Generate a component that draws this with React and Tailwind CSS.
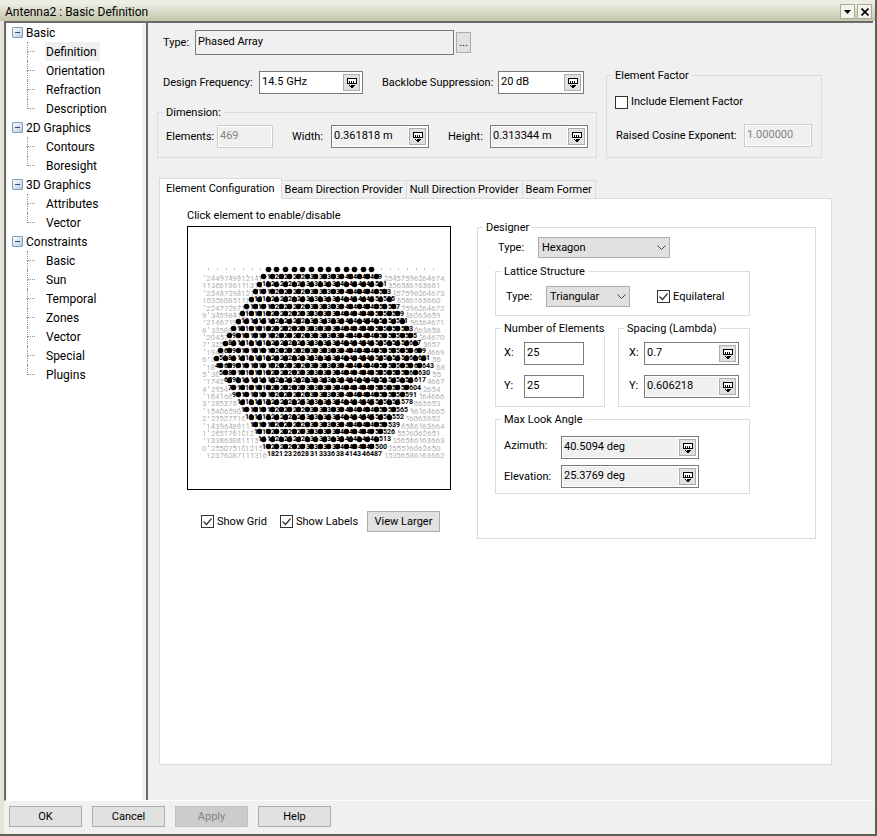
import { useState } from "react";
import clsx from "clsx";

const TREE = [
  { label: "Basic", items: ["Definition", "Orientation", "Refraction", "Description"] },
  { label: "2D Graphics", items: ["Contours", "Boresight"] },
  { label: "3D Graphics", items: ["Attributes", "Vector"] },
  { label: "Constraints", items: ["Basic", "Sun", "Temporal", "Zones", "Vector", "Special", "Plugins"] },
];

const TABS = ["Element Configuration", "Beam Direction Provider", "Null Direction Provider", "Beam Former"];

const ROWS = 25;
const HALF_COLUMNS = 54;

// Elements are numbered bottom to top, one half column after another.
// Even half columns hold the 12 odd rows, odd half columns hold the 13 even rows.
function buildLattice() {
  const elements = [];
  for (let k = 0; k < HALF_COLUMNS; k++) {
    const odd = k % 2 === 1;
    for (let row = odd ? 0 : 1, i = 0; row < ROWS; row += 2, i++) {
      const d = Math.abs(row - 12);
      const enabled = k >= 3 + d && k <= 51 - d;
      const last = k === 51 - d || k >= HALF_COLUMNS - 2;
      const id = Math.floor(k / 2) * 25 + (odd ? 12 : 0) + i;
      // the pitch leaves room for two digits unless the element ends its run;
      // the one after a run starts behind the third digit
      const afterRun = k === 53 - d;
      elements.push({
        id,
        x: Math.round(15 + k * 4.32),
        y: Math.round(42 + (24 - row) * 7.38),
        enabled,
        label: String(id).slice(afterRun ? 1 : 0, last ? 3 : 2),
        shift: afterRun ? 4 : -1,
      });
    }
  }
  return elements;
}

const LATTICE = buildLattice();

function ElementPlot({ showGrid, showLabels }) {
  const [toggled, setToggled] = useState({});
  const isOn = (el) => el.enabled !== Boolean(toggled[el.id]);
  const ordered = [...LATTICE.filter((el) => !isOn(el)), ...LATTICE.filter(isOn)];

  return (
    <svg viewBox="0 0 262 262" className="block size-full" role="img" aria-label="Element lattice">
      {ordered.map((el) => {
        const on = isOn(el);
        return (
          <g key={el.id} onClick={() => setToggled((t) => ({ ...t, [el.id]: !t[el.id] }))}>
            {on && <circle cx={el.x + 0.5} cy={el.y + 0.5} r="2.8" fill="#000" />}
            {!on && showGrid && <rect x={el.x + 1} y={el.y - 1} width="1" height="2" fill="#c0c0c0" />}
            {showLabels && (
              <>
                <rect x={el.x + el.shift} y={el.y + 5} width={el.label.length * 4} height="6" fill="#fff" />
                <text
                  x={el.x + el.shift}
                  y={on ? el.y + 10 : el.y + 12}
                  fill={on ? "#000" : "#b4b4b4"}
                  className={on ? "text-[7px] font-bold" : "text-[8px]"}
                >
                  {el.label}
                </text>
              </>
            )}
          </g>
        );
      })}
    </svg>
  );
}

function UnitIcon() {
  return (
    <svg width="10" height="10" viewBox="0 0 10 10" shapeRendering="crispEdges">
      <path d="M0 0h10v6h-10z" fill="#000" />
      <path d="M1 1h8v2h-8zM1 3h1v2h-1zM3 3h1v2h-1zM5 3h1v2h-1zM7 3h2v2h-2z" fill="#fff" />
      <path d="M2 7h1v1h-1zM4 7h3v1h-3zM7 7h1v1h-1zM3 8h4v1h-4zM4 9h2v1h-2z" fill="#000" />
    </svg>
  );
}

function TextField({ label, id, value, className, disabled, readOnly, labelClass, unit }) {
  return (
    <>
      <label htmlFor={id} className={clsx("shrink-0 whitespace-nowrap", labelClass)}>
        {label}
      </label>
      <span
        className={clsx(
          "flex h-[23px] shrink-0 border bg-white p-px",
          disabled ? "border-[#cccccc]" : "border-[#7a7a7a]",
          className
        )}
      >
        <input
          id={id}
          defaultValue={value}
          disabled={disabled}
          readOnly={readOnly}
          className={clsx(
            "w-0 min-w-0 flex-1 pb-0.5 pl-px outline-none",
            disabled || readOnly ? "bg-[#f0f0f0]" : "bg-white",
            disabled && "text-[#838383]"
          )}
        />
        {unit && (
          <button
            type="button"
            aria-label={`${label} units`}
            className="m-px flex size-[17px] items-center justify-center border border-[#adadad] bg-[#e1e1e1]"
          >
            <UnitIcon />
          </button>
        )}
      </span>
    </>
  );
}

function CheckBox({ id, label, checked, onChange }) {
  return (
    <label htmlFor={id} className="flex items-center gap-[3px] whitespace-nowrap">
      <span className="relative block size-[13px]">
        <input
          id={id}
          type="checkbox"
          checked={checked}
          onChange={(e) => onChange(e.target.checked)}
          className="block size-[13px] appearance-none border border-[#333333] bg-white"
        />
        {checked && (
          <svg viewBox="0 0 13 13" className="pointer-events-none absolute inset-0" fill="none" stroke="#333" strokeWidth="1.2">
            <path d="M2.5 6.5l3 3 5-6" />
          </svg>
        )}
      </span>
      {label}
    </label>
  );
}

function DropDown({ id, options, className }) {
  return (
    <span className={clsx("relative block h-[21px]", className)}>
      <select id={id} className="block size-full appearance-none border border-[#adadad] bg-[#e1e1e1] pl-[3px] outline-none">
        {options.map((o) => (
          <option key={o}>{o}</option>
        ))}
      </select>
      <svg width="9" height="6" viewBox="0 0 9 6" className="pointer-events-none absolute top-2 right-1" fill="none" stroke="#444">
        <path d="M0.5 0.5l4 4 4-4" />
      </svg>
    </span>
  );
}

function Group({ title, className, children }) {
  return (
    <fieldset className={clsx("min-w-0 border border-[#dcdcdc]", className)}>
      <legend className="ml-[5px] px-[3px] leading-[13px] whitespace-nowrap">{title}</legend>
      {children}
    </fieldset>
  );
}

function PushButton({ children, disabled }) {
  return (
    <button
      type="button"
      disabled={disabled}
      className={clsx(
        "h-[21px] w-[73px] border",
        disabled ? "border-[#bfbfbf] bg-[#cccccc] text-[#838383]" : "border-[#adadad] bg-[#e1e1e1]"
      )}
    >
      {children}
    </button>
  );
}

function Tree() {
  const [closed, setClosed] = useState({});
  return (
    <nav className="w-[139px] shrink-0 border-r-4 border-[#f0f0f0] bg-white text-[12px]">
      {TREE.map((node) => (
        <div key={node.label}>
          <div className="flex h-[19px] items-center gap-[3px] pl-[5px]">
            <button
              type="button"
              aria-label={`Toggle ${node.label}`}
              onClick={() => setClosed((c) => ({ ...c, [node.label]: !c[node.label] }))}
              className="flex size-[11px] items-center justify-center rounded-[1px] border border-[#7b9ebd] bg-linear-to-br from-white to-[#b8cae0]"
            >
              <svg width="5" height="5" shapeRendering="crispEdges">
                <path d={closed[node.label] ? "M0 2h5v1h-5zM2 0h1v5h-1z" : "M0 2h5v1h-5z"} fill="#2b4a80" />
              </svg>
            </button>
            <span>{node.label}</span>
          </div>
          {!closed[node.label] && (
            <ul>
              {node.items.map((item, i) => (
                <li key={item} className="flex h-[19px] pl-5">
                  <span className="flex w-[18px] flex-col">
                    <span className="h-[10px] w-2 border-b border-l border-dotted border-[#909090]" />
                    {i < node.items.length - 1 && <span className="h-[9px] border-l border-dotted border-[#909090]" />}
                  </span>
                  <a
                    href="#"
                    className={clsx("px-px pt-px leading-[18px]", node.label === "Basic" && item === "Definition" && "bg-[#f0f0f0] pr-[3px]")}
                  >
                    {item}
                  </a>
                </li>
              ))}
            </ul>
          )}
        </div>
      ))}
    </nav>
  );
}

function Designer() {
  const [equilateral, setEquilateral] = useState(true);
  return (
    <Group title="Designer" className="h-[318px] flex-1">
      <div className="px-[17px]">
        <div className="mt-[3px] flex items-center">
          <label htmlFor="shape" className="w-[43px] pl-[3px]">Type:</label>
          <DropDown id="shape" options={["Hexagon", "Circular", "Linear", "Polygon"]} className="w-[132px]" />
        </div>

        <Group title="Lattice Structure" className="mt-[7px] h-[51px] w-[255px]">
          <div className="mt-2 flex items-center pl-2.5">
            <label htmlFor="lattice" className="w-10">Type:</label>
            <DropDown id="lattice" options={["Triangular", "Rectangular"]} className="mr-[27px] w-[84px]" />
            <CheckBox id="equilateral" label="Equilateral" checked={equilateral} onChange={setEquilateral} />
          </div>
        </Group>

        <div className="mt-[6px] flex gap-[13px]">
          <Group title="Number of Elements" className="h-[85px] w-[110px]">
            <div className="mt-[7px] flex items-center pl-2">
              <TextField id="count-x" label="X:" value="25" labelClass="w-5 pb-0.5" className="w-[60px]" />
            </div>
            <div className="mt-2.5 flex items-center pl-2">
              <TextField id="count-y" label="Y:" value="25" labelClass="w-5 pb-0.5" className="w-[60px]" />
            </div>
          </Group>
          <Group title="Spacing (Lambda)" className="h-[85px] w-[132px]">
            <div className="mt-[7px] flex items-center pl-2.5">
              <TextField id="spacing-x" label="X:" value="0.7" unit labelClass="w-[15px] pb-0.5" className="w-[95px]" />
            </div>
            <div className="mt-2.5 flex items-center pl-2.5">
              <TextField id="spacing-y" label="Y:" value="0.606218" unit readOnly labelClass="w-[15px] pb-0.5" className="w-[95px]" />
            </div>
          </Group>
        </div>

        <Group title="Max Look Angle" className="mt-[6px] h-[81px] w-[255px]">
          <div className="mt-2.5 flex items-center pl-2">
            <TextField id="azimuth" label="Azimuth:" value="40.5094 deg" unit readOnly labelClass="w-[57px] pb-1" className="w-[138px]" />
          </div>
          <div className="mt-1.5 flex items-center pl-2">
            <TextField id="elevation" label="Elevation:" value="25.3769 deg" unit readOnly labelClass="w-[57px]" className="w-[138px]" />
          </div>
        </Group>
      </div>
    </Group>
  );
}

export default function App() {
  const [tab, setTab] = useState(TABS[0]);
  const [showGrid, setShowGrid] = useState(true);
  const [showLabels, setShowLabels] = useState(true);
  const [includeFactor, setIncludeFactor] = useState(false);

  return (
    <div className="flex min-h-screen flex-col border-r-2 border-b-2 border-[#5f5f55] bg-[#f0f0f0] font-[Roboto,Arial,sans-serif] text-[11px] leading-[14px] text-black">
      <header className="flex h-[21px] items-center border-t-2 border-[#ecece4] bg-linear-to-b from-[#f0f0e8] to-[#c4c5a8] pr-[3px] pl-[5px]">
        <h1 className="flex-1 text-[12px]">Antenna2 : Basic Definition</h1>
        <button type="button" aria-label="Window menu" className="mr-0.5 flex size-[15px] items-center justify-center border border-[#a8a898] bg-[#f4f4ee]">
          <svg width="7" height="4"><path d="M0 0h7l-3.5 4z" /></svg>
        </button>
        <button type="button" aria-label="Close" className="flex size-[15px] items-center justify-center border border-[#a8a898] bg-[#f4f4ee]">
          <svg width="8" height="8" stroke="#000" strokeWidth="1.6"><path d="M0.5 0.5l7 7M7.5 0.5l-7 7" /></svg>
        </button>
      </header>

      <div className="flex flex-1 flex-col border-l-4 border-[#e4e4da] pr-0.5 pb-1">
        <div className="flex flex-1 border-t-2 border-b border-l-2 border-t-[#6a6a6a] border-b-white border-l-[#6a6a6a]">
          <div className="flex w-[140px] shrink-0 pl-px">
            <Tree />
          </div>

          <main className="flex min-w-0 flex-1 flex-col border-l-2 border-[#6a6a6a] pb-[35px]">
            <div className="flex items-end gap-[9px] pl-[9px]">
              <div className="w-[440px]">
                <div className="mt-[7px] flex items-center pl-1.5">
                  <label htmlFor="type" className="w-8">Type:</label>
                  <input id="type" readOnly defaultValue="Phased Array" className="h-[25px] w-[259px] border border-[#7a7a7a] bg-[#f0f0f0] pb-0.5 pl-[2px] outline-none" />
                  <button type="button" aria-label="Choose type" className="ml-0.5 h-[21px] w-[15px] border border-[#adadad] bg-[#e1e1e1]">...</button>
                </div>
                <div className="mt-4 flex items-center pl-1.5">
                  <TextField id="freq" label="Design Frequency:" value="14.5 GHz" unit labelClass="w-24" className="mr-[19px] w-[104px]" />
                  <TextField id="backlobe" label="Backlobe Suppression:" value="20 dB" unit labelClass="w-[116px]" className="w-[86px]" />
                </div>
                <Group title="Dimension:" className="mt-3 h-[52px]">
                  <div className="mt-[6px] flex items-center pl-2">
                    <TextField id="elements" label="Elements:" value="469" disabled labelClass="w-[51px]" className="mr-[19px] w-[56px]" />
                    <TextField id="width" label="Width:" value="0.361818 m" unit readOnly labelClass="w-[39px]" className="mr-[19px] w-[98px]" />
                    <TextField id="height" label="Height:" value="0.313344 m" unit readOnly labelClass="w-[42px]" className="w-[98px]" />
                  </div>
                </Group>
              </div>
              <Group title="Element Factor" className="h-[89px] w-[216px]">
                <div className="mt-[13px] pl-2">
                  <CheckBox id="include" label="Include Element Factor" checked={includeFactor} onChange={setIncludeFactor} />
                </div>
                <div className="mt-[15px] flex items-center pl-[9px]">
                  <TextField id="exponent" label="Raised Cosine Exponent:" value="1.000000" disabled labelClass="w-32" className="w-[68px]" />
                </div>
              </Group>
            </div>

            <div className="mt-5 flex flex-1 flex-col pr-[41px] pl-[11px]">
              <div role="tablist" className="flex items-end">
                {TABS.map((name) => (
                  <button
                    key={name}
                    type="button"
                    role="tab"
                    aria-selected={tab === name}
                    onClick={() => setTab(name)}
                    className={clsx(
                      "border border-b-0 border-[#dcdcdc] whitespace-nowrap",
                      tab === name ? "z-10 -mb-px h-[21px] bg-white px-1.5" : "h-[18px] border-l-0 bg-[#f0f0f0] px-[3px]"
                    )}
                  >
                    {name}
                  </button>
                ))}
              </div>
              <section role="tabpanel" className="flex flex-1 items-start gap-[26px] border border-[#dcdcdc] bg-white pt-[10px] pr-[15px] pl-[27px]">
                <div className="w-[264px]">
                  <p>Click element to enable/disable</p>
                  <div className="mt-[3px] size-[264px] border border-black">
                    <ElementPlot showGrid={showGrid} showLabels={showLabels} />
                  </div>
                  <div className="mt-[21px] flex items-center pl-3.5">
                    <div className="w-[79px]">
                      <CheckBox id="grid" label="Show Grid" checked={showGrid} onChange={setShowGrid} />
                    </div>
                    <div className="w-[87px]">
                      <CheckBox id="labels" label="Show Labels" checked={showLabels} onChange={setShowLabels} />
                    </div>
                    <PushButton>View Larger</PushButton>
                  </div>
                </div>
                <div className="flex flex-1 pt-3">
                  <Designer />
                </div>
              </section>
            </div>
          </main>
        </div>

        <footer className="flex gap-2.5 pt-[5px] pb-[3px] pl-[5px]">
          <PushButton>OK</PushButton>
          <PushButton>Cancel</PushButton>
          <PushButton disabled>Apply</PushButton>
          <PushButton>Help</PushButton>
        </footer>
      </div>
    </div>
  );
}
